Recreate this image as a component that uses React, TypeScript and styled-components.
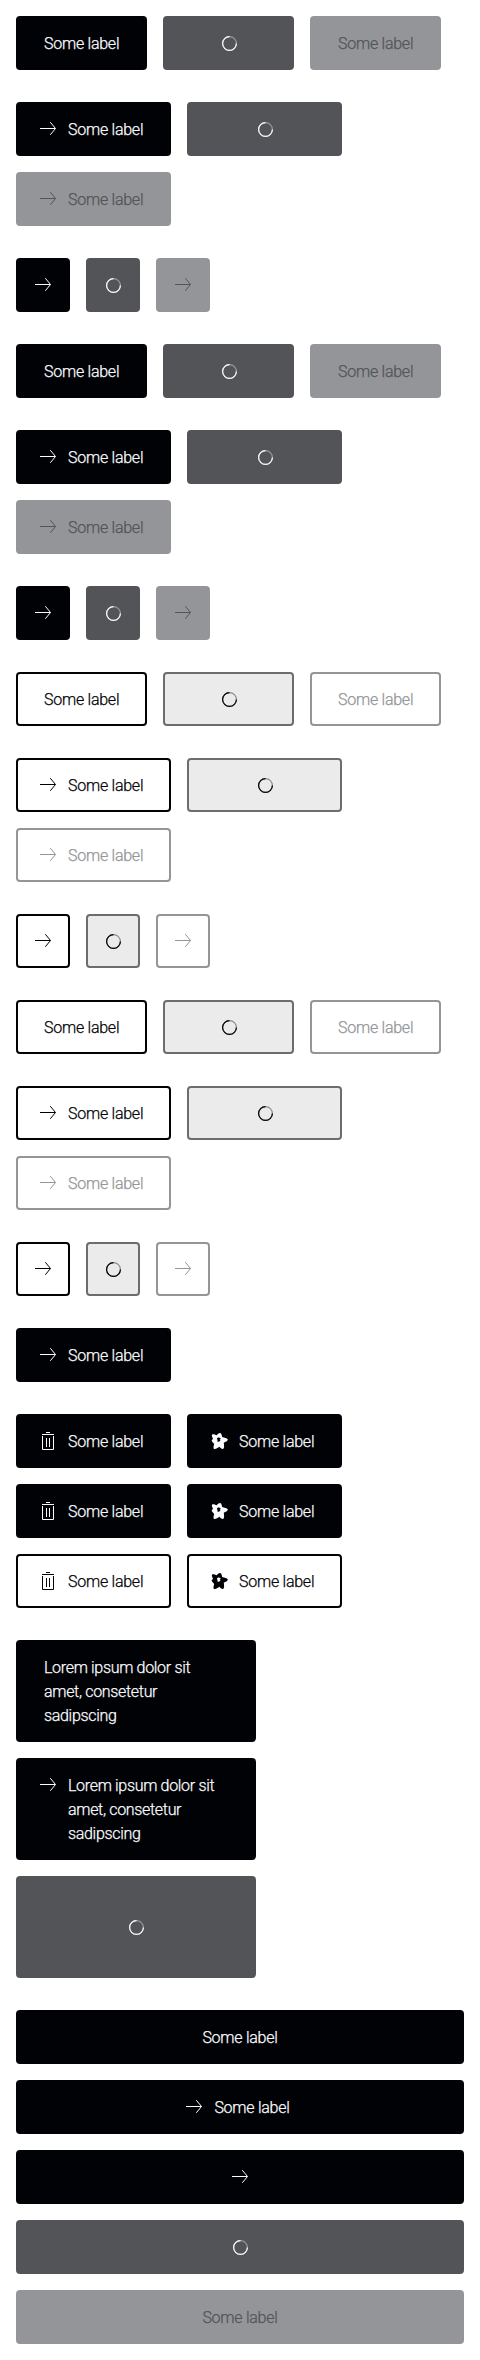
import React from "react";
import styled, { createGlobalStyle, css } from "styled-components";

type Variant = "primary" | "secondary";
type State = "default" | "loading" | "disabled";
type IconName = "arrow" | "trash" | "star";

const palette = {
  primary: {
    default: { bg: "#010205", border: "#010205", text: "#fbfcff" },
    loading: { bg: "#535457", border: "#535457", text: "#fbfcff" },
    disabled: { bg: "#949598", border: "#949598", text: "#535457" },
  },
  secondary: {
    default: { bg: "#ffffff", border: "#010205", text: "#010205" },
    loading: { bg: "#ebebeb", border: "#6b6d70", text: "#010205" },
    disabled: { bg: "#ffffff", border: "#949598", text: "#949598" },
  },
};

const GlobalStyle = createGlobalStyle`
  *, *::before, *::after { box-sizing: border-box; }
  body { margin: 0; background: #fff; }
`;

const Page = styled.main`
  display: flex;
  flex-direction: column;
  gap: 32px;
  padding: 16px;
`;

const Group = styled.section<{ $column?: boolean }>`
  display: flex;
  flex-wrap: wrap;
  gap: 16px;
  ${({ $column }) => $column && css`flex-direction: column;`}
`;

const ButtonRoot = styled.button<{
  $variant: Variant;
  $state: State;
  $icon: boolean;
  $square: boolean;
  $width?: string;
}>`
  display: flex;
  justify-content: ${({ $width }) => ($width === "240px" ? "flex-start" : "center")};
  align-items: flex-start;
  gap: 8px;
  position: relative;
  margin: 0;
  width: ${({ $width, $square, $icon }) => $width ?? ($square ? "54px" : $icon ? "155px" : "131px")};
  padding: ${({ $icon, $square }) => ($square ? "13px" : $icon ? "13px 26px 13px 18px" : "13px 26px")};
  border: 2px solid;
  border-radius: 4px;
  font: 300 16px/24px Roboto, "Liberation Sans", sans-serif;
  letter-spacing: -0.25px;
  -webkit-text-stroke: 0.25px currentColor;
  text-align: start;
  ${({ $variant, $state }) => {
    const c = palette[$variant][$state];
    return css`
      background: ${c.bg};
      border-color: ${c.border};
      color: ${c.text};
    `;
  }}
`;

const Label = styled.span<{ $hidden?: boolean }>`
  display: block;
  min-width: 75px;
  margin: 1px 0 -1px;
  white-space: nowrap;
  visibility: ${({ $hidden }) => ($hidden ? "hidden" : "visible")};
`;

const Line = styled.span`
  display: block;
  letter-spacing: -0.32px;
`;

const IconSvg = styled.svg`
  display: block;
  flex: none;
  width: 24px;
  height: 24px;
`;

const SpinnerOverlay = styled.span`
  position: absolute;
  inset: 0;
  display: flex;
  align-items: center;
  justify-content: center;
`;

function Icon({ name }: { name: IconName }) {
  return (
    <IconSvg viewBox="0 0 24 24" fill="none" stroke="currentColor" aria-hidden="true">
      {name === "arrow" && <path d="M4 11.5h15.3M14.3 5.2l5.2 6.3-5.2 6.3" />}
      {name === "trash" && (
        <path d="M10 3.5h4M6 5.5h12M6.5 7v13.5h11V7M10.5 9v9M13.5 9v9" />
      )}
      {name === "star" && (
        <path
          stroke="none"
          fill="currentColor"
          fillRule="evenodd"
          d="M5.2 5.4c1-.6 3 .3 4.4.8 1-.9 2.4-2.3 3.6-2.1 1.3.2 1.6 2.5 2 3.9 1.9.4 5.5 1.2 5.6 2.6.1 1.7-2.5 2.4-4 3.2.2 2 .8 5.2-.5 6-1.2.7-2.9-1-4-2-1.5 1.1-4.1 2.9-5.3 2.1-1.2-.9-.1-3.3.2-5-1-1.2-2.9-2.5-2.5-3.6.2-.6.8-.9 1.4-1.3-.6-1.5-1.9-3.9-.9-4.6ZM11.9 8.6c-1.1-.1-1.9.6-2 1.6 0 .6.5.7.9.3.3.5 0 1-.6.9.1.8.7 1.4 1.5 1.3.9-.1 1.7-.7 1.9-1.6-.5.2-.9-.1-.8-.6.2-.4.7-.5.9-.1 0-1-.8-1.7-1.8-1.8Z"
        />
      )}
    </IconSvg>
  );
}

function Spinner() {
  return (
    <IconSvg viewBox="0 0 24 24" fill="none" stroke="currentColor" strokeWidth="1.2">
      <circle cx="12.5" cy="12.5" r="6.9" opacity=".4" />
      <path d="M19.4 12.5a6.9 6.9 0 1 1-6.9-6.9" />
    </IconSvg>
  );
}

interface ButtonProps {
  variant?: Variant;
  state?: State;
  icon?: IconName;
  square?: boolean;
  width?: string;
  children?: React.ReactNode;
}

function Button({ variant = "primary", state = "default", icon, square = false, width, children }: ButtonProps) {
  const loading = state === "loading";
  return (
    <ButtonRoot
      type="button"
      disabled={state !== "default"}
      aria-label={square || loading ? "Some label" : undefined}
      $variant={variant}
      $state={state}
      $icon={!!icon}
      $square={square}
      $width={width}
    >
      {icon && !loading && <Icon name={icon} />}
      {!square && !loading && <Label>{children ?? "Some label"}</Label>}
      {loading && (
        <>
          <Label $hidden>{children ?? "\u00a0"}</Label>
          <SpinnerOverlay>
            <Spinner />
          </SpinnerOverlay>
        </>
      )}
    </ButtonRoot>
  );
}

const states: State[] = ["default", "loading", "disabled"];

function Variations({ variant }: { variant: Variant }) {
  return (
    <>
      <Group>
        {states.map((s) => <Button key={s} variant={variant} state={s} />)}
      </Group>
      <Group>
        {states.map((s) => <Button key={s} variant={variant} state={s} icon="arrow" />)}
      </Group>
      <Group>
        {states.map((s) => <Button key={s} variant={variant} state={s} icon="arrow" square />)}
      </Group>
    </>
  );
}

function LongText() {
  return (
    <>
      <Line>Lorem ipsum dolor sit</Line>
      <Line>amet, consetetur</Line>
      <Line>sadipscing</Line>
    </>
  );
}

export default function App() {
  return (
    <>
      <GlobalStyle />
      <Page>
        <Variations variant="primary" />
        <Variations variant="primary" />
        <Variations variant="secondary" />
        <Variations variant="secondary" />
        <Group>
          <Button icon="arrow" />
        </Group>
        <Group $column>
          {(["primary", "primary", "secondary"] as Variant[]).map((v, i) => (
            <Group key={i}>
              <Button variant={v} icon="trash" />
              <Button variant={v} icon="star" />
            </Group>
          ))}
        </Group>
        <Group $column>
          <Button width="240px"><LongText /></Button>
          <Button width="240px" icon="arrow"><LongText /></Button>
          <Button width="240px" state="loading"><LongText /></Button>
        </Group>
        <Group $column>
          <Button width="100%" />
          <Button width="100%" icon="arrow" />
          <Button width="100%" icon="arrow" square />
          <Button width="100%" state="loading" />
          <Button width="100%" state="disabled" />
        </Group>
      </Page>
    </>
  );
}
